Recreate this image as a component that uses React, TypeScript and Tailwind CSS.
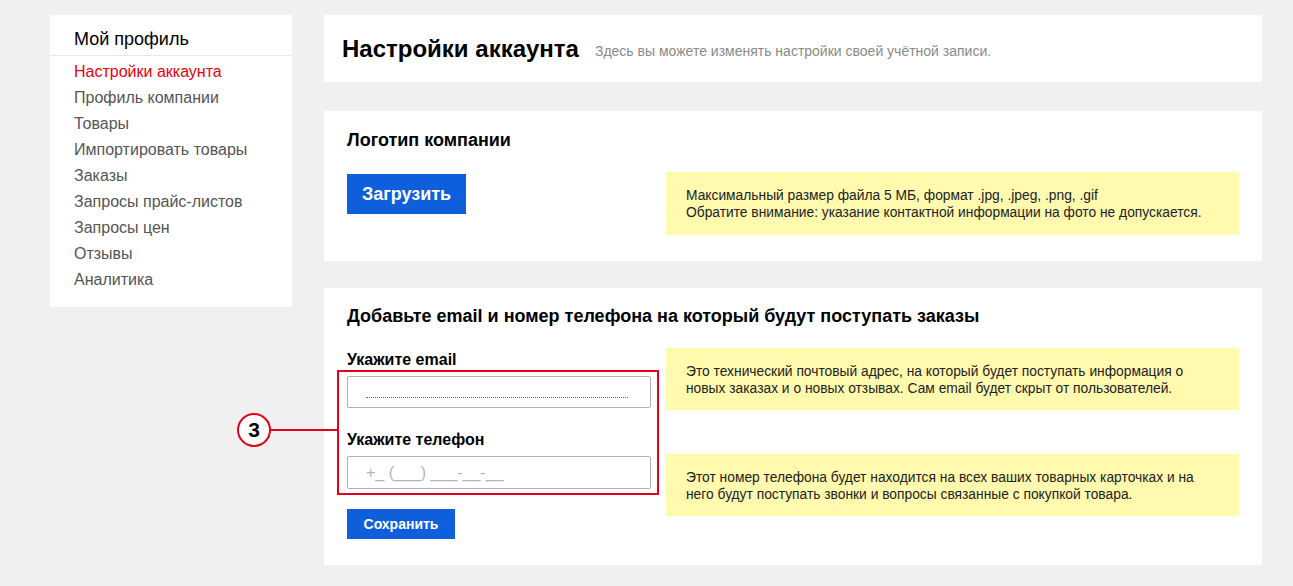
import React from "react";

const menu = [
  "Настройки аккаунта",
  "Профиль компании",
  "Товары",
  "Импортировать товары",
  "Заказы",
  "Запросы прайс-листов",
  "Запросы цен",
  "Отзывы",
  "Аналитика",
];

export default function App() {
  return (
    <div
      className="min-h-[586px] w-full bg-[#f0f0f0] pl-[50px] pt-[15px] pb-[21px] flex gap-[32px] items-start"
      style={{ fontFamily: '"Liberation Sans", Arial, sans-serif' }}
    >
      {/* Sidebar */}
      <div className="w-[242px] bg-white pb-[14px]">
        <div className="h-[41px] border-b border-[#e8e8e8] pl-[24px] flex items-center pt-[8px] text-[18px] text-black">
          Мой профиль
        </div>
        <ul className="pl-[24px] pt-[3px]">
          {menu.map((m, i) => (
            <li
              key={m}
              className={`h-[26px] flex items-center text-[16px] ${
                i === 0 ? "text-[#e8000e]" : "text-[#555555]"
              }`}
            >
              {m}
            </li>
          ))}
        </ul>
      </div>

      {/* Main */}
      <div className="w-[938px] flex flex-col">
        <div className="h-[67px] bg-white pl-[18px] flex items-center gap-[16px] pt-[1px]">
          <h1 className="text-[24px] font-bold text-black">Настройки аккаунта</h1>
          <span className="text-[14px] text-[#8a8a8a] pt-[5px]">
            Здесь вы можете изменять настройки своей учётной записи.
          </span>
        </div>

        <div className="mt-[29px] bg-white px-[23px] pt-[19px] pb-[26px]">
          <h2 className="text-[18px] font-bold text-black leading-[20px]">Логотип компании</h2>
          <div className="mt-[22px] flex gap-[200px]">
            <button className="mt-[2px] w-[119px] h-[40px] bg-[#0f5fdc] text-white font-bold text-[18px]">
              Загрузить
            </button>
            <div className="ml-auto w-[573px] h-[63px] bg-[#fffaad] pl-[20px] pt-[15px] text-[13.8px] leading-[17px] text-[#222]">
              <div>Максимальный размер файла 5 МБ, формат .jpg, .jpeg, .png, .gif</div>
              <div>Обратите внимание: указание контактной информации на фото не допускается.</div>
            </div>
          </div>
        </div>

        <div className="mt-[27px] bg-white px-[23px] pt-[18px] pb-[26px]">
          <h2 className="text-[18px] font-bold text-black leading-[20px]">
            Добавьте email и номер телефона на который будут поступать заказы
          </h2>
          <div className="mt-[22px] flex gap-[15px]">
            <div className="w-[304px] flex flex-col">
              <label className="pt-[3px] h-[21px] text-[16px] font-bold leading-[18px] text-black">
                Укажите email
              </label>
              <div className="relative mt-[7px]">
                <div className="h-[32px] border border-[#b0b0b0] rounded-[2px] flex items-center pl-[18px]">
                  <span className="w-[262px] border-b border-dotted border-[#666] mt-[10px]"></span>
                </div>
                <label className="block mt-[23px] h-[18px] text-[16px] font-bold leading-[18px] text-black">
                  Укажите телефон
                </label>
                <div className="mt-[7px] h-[33px] border border-[#b0b0b0] rounded-[2px] flex items-center pl-[18px] text-[16px] text-[#b5b5b5]">
                  +_ (___) ___-__-__
                </div>
                {/* annotation overlay */}
                <div className="absolute -top-[6px] -left-[10px] -right-[8px] -bottom-[6px] border-2 border-[#e3001b] pointer-events-none"></div>
                <div className="absolute top-[53px] -left-[76px] w-[66px] h-[2px] bg-[#e3001b]"></div>
                <div className="absolute top-[37px] -left-[110px] w-[34px] h-[34px] rounded-full border-2 border-[#e3001b] bg-white flex items-center justify-center text-[21px] font-bold text-black">
                  3
                </div>
              </div>
              <button className="mt-[20px] w-[108px] h-[30px] bg-[#0f5fdc] text-white font-bold text-[14px]">
                Сохранить
              </button>
            </div>
            <div className="w-[573px] flex flex-col gap-[44px]">
              <div className="h-[62px] bg-[#fffaad] pl-[20px] pt-[15px] text-[13.8px] leading-[17px] text-[#222]">
                <div>Это технический почтовый адрес, на который будет поступать информация о</div>
                <div>новых заказах и о новых отзывах. Сам email будет скрыт от пользователей.</div>
              </div>
              <div className="h-[62px] bg-[#fffaad] pl-[20px] pt-[15px] text-[13.8px] leading-[17px] text-[#222]">
                <div>Этот номер телефона будет находится на всех ваших товарных карточках и на</div>
                <div>него будут поступать звонки и вопросы связанные с покупкой товара.</div>
              </div>
            </div>
          </div>
        </div>
      </div>
    </div>
  );
}
